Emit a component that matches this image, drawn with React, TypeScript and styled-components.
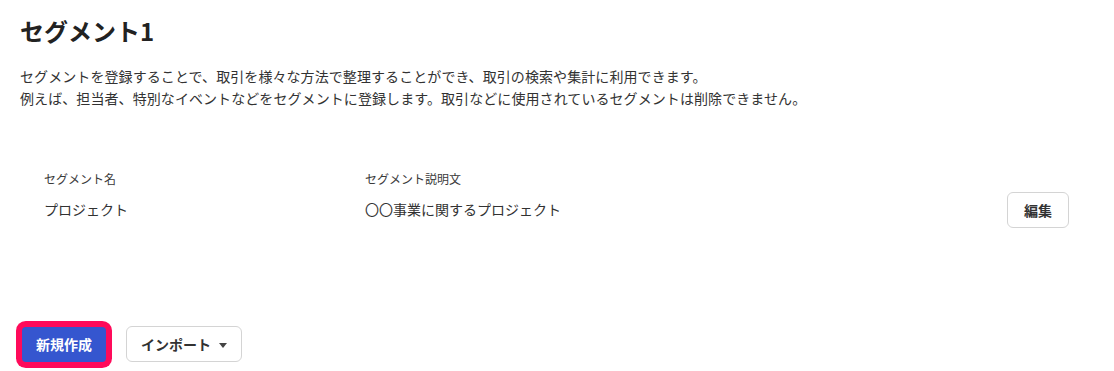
import styled, { createGlobalStyle } from 'styled-components';

const GlobalStyle = createGlobalStyle`
  body {
    margin: 0;
    background: #fff;
    color: #323232;
    font-family: 'Noto Sans CJK JP', 'Noto Sans', sans-serif;
  }
`;

const segments = [
  { name: 'プロジェクト', description: '〇〇事業に関するプロジェクト' },
];

const App = () => {
  return (
    <Page>
      <GlobalStyle />
      <Title>セグメント1</Title>
      <Lead>
        セグメントを登録することで、取引を様々な方法で整理することができ、取引の検索や集計に利用できます。
        <br />
        例えば、担当者、特別なイベントなどをセグメントに登録します。取引などに使用されているセグメントは削除できません。
      </Lead>
      <Table>
        <HeadRow>
          <HeadCell>セグメント名</HeadCell>
          <HeadCell>セグメント説明文</HeadCell>
          <HeadCell />
        </HeadRow>
        {segments.map((s) => (
          <Row key={s.name}>
            <Cell>{s.name}</Cell>
            <Cell>{s.description}</Cell>
            <ActionCell>
              <Button type="button" $pad={16}>
                編集
              </Button>
            </ActionCell>
          </Row>
        ))}
      </Table>
      <Footer>
        <PrimaryButton type="button">新規作成</PrimaryButton>
        <Button type="button">
          インポート
          <Caret />
        </Button>
      </Footer>
    </Page>
  );
};
export default App;

const Page = styled.main`
  width: 1114px;
  height: 371px;
  box-sizing: border-box;
  padding: 14px 20px 0;
  display: flex;
  flex-direction: column;
`;

const Title = styled.h1`
  margin: 0;
  font-size: 24px;
  line-height: 34px;
  font-weight: 700;
  color: #222;
`;

const Lead = styled.p`
  margin: 17px 0 0;
  font-size: 14px;
  line-height: 22px;
  letter-spacing: 0.08px;
`;

const Table = styled.div`
  margin-top: 57px;
  padding: 0 25px 0 24px;
  display: flex;
  flex-direction: column;
`;

const columns = `321px 1fr auto`;

const HeadRow = styled.div`
  display: grid;
  grid-template-columns: ${columns};
  align-items: center;
  height: 24px;
`;

const HeadCell = styled.div`
  font-size: 12px;
  color: #3a3a3a;
`;

const Row = styled.div`
  display: grid;
  grid-template-columns: ${columns};
  align-items: center;
  height: 40px;
`;

const Cell = styled.div`
  font-size: 14px;
  margin-top: -2px;
`;

const ActionCell = styled.div`
  display: flex;
  justify-content: flex-end;
`;

const Button = styled.button<{ $pad?: number }>`
  display: inline-flex;
  align-items: center;
  gap: 8px;
  height: 36px;
  padding: 0 ${(p) => p.$pad ?? 14}px;
  border: 1px solid #d4d4d4;
  border-radius: 6px;
  background: #fff;
  color: #323232;
  font-family: inherit;
  font-size: 14px;
  font-weight: 700;
  cursor: pointer;
`;

const PrimaryButton = styled.button`
  height: 35px;
  padding: 0 14px;
  border: none;
  border-radius: 4px;
  background: #3556cf;
  color: #fff;
  font-family: inherit;
  font-size: 14px;
  font-weight: 700;
  box-shadow: 0 0 0 6px #ff0a5a;
  cursor: pointer;
`;

const Caret = styled.span`
  width: 0;
  height: 0;
  border-left: 4px solid transparent;
  border-right: 4px solid transparent;
  border-top: 5px solid #444;
  margin-top: 2px;
`;

const Footer = styled.div`
  margin-top: 96px;
  padding-left: 2px;
  display: flex;
  align-items: center;
  gap: 20px;
`;
